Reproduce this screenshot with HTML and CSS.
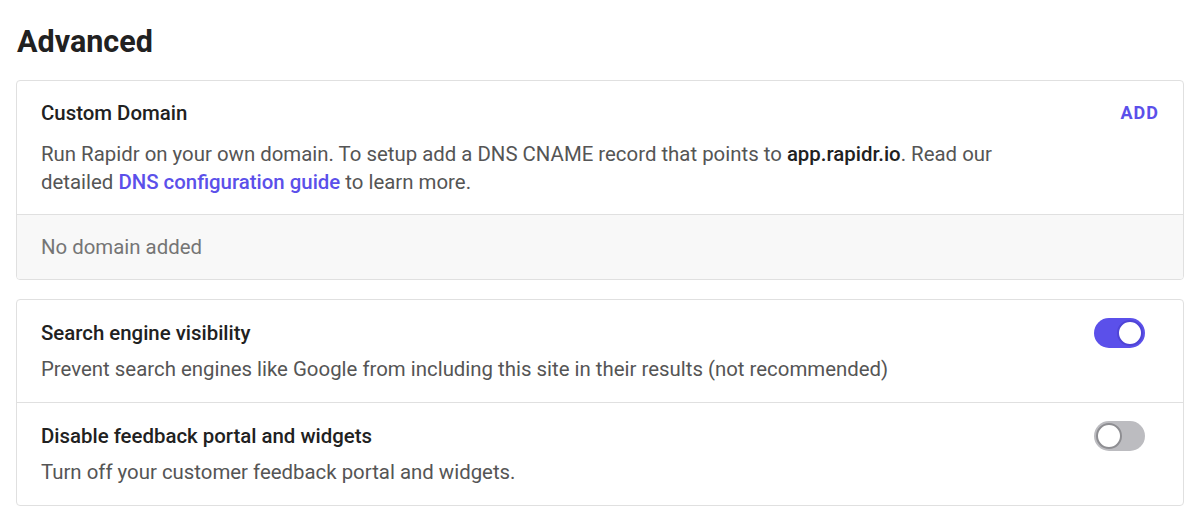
FILE: index.html
```html
<!DOCTYPE html>
<html lang="en">
<head>
<meta charset="utf-8">
<title>Advanced</title>
<link rel="stylesheet" href="styles.css">
</head>
<body>
<main class="page">
  <h1 class="page-title">Advanced</h1>

  <section class="card">
    <div class="card-main">
      <div class="card-head">
        <h2 class="item-title">Custom Domain</h2>
        <a class="add-link" href="#">ADD</a>
      </div>
      <p class="item-desc domain-desc">Run Rapidr on your own domain. To setup add a DNS CNAME record that points to <strong>app.rapidr.io</strong>. Read our detailed <a class="link" href="#">DNS configuration guide</a> to learn more.</p>
    </div>
    <div class="card-empty">No domain added</div>
  </section>

  <section class="card">
    <div class="setting-row">
      <div class="setting-text">
        <h2 class="item-title">Search engine visibility</h2>
        <p class="item-desc">Prevent search engines like Google from including this site in their results (not recommended)</p>
      </div>
      <span class="toggle toggle-on"><span class="knob"></span></span>
    </div>
    <div class="setting-row">
      <div class="setting-text">
        <h2 class="item-title">Disable feedback portal and widgets</h2>
        <p class="item-desc">Turn off your customer feedback portal and widgets.</p>
      </div>
      <span class="toggle toggle-off"><span class="knob"></span></span>
    </div>
  </section>
</main>
</body>
</html>
```

FILE: styles.css
```css
* {
  box-sizing: border-box;
}

html, body {
  margin: 0;
  padding: 0;
  background: #ffffff;
}

body {
  font-family: Roboto, "Liberation Sans", Arial, sans-serif;
  color: #212121;
}

.page {
  padding: 24px 16px 0 16px;
  display: flex;
  flex-direction: column;
  gap: 19px;
}

.page-title {
  margin: 0 0 1px 1px;
  font-size: 30.5px;
  line-height: 36px;
  font-weight: 700;
  color: #212121;
}

.card {
  border: 1px solid #e0e0e0;
  border-radius: 4px;
  background: #ffffff;
  overflow: hidden;
}

.card-main {
  padding: 20px 24px 18px 24px;
}

.card-head {
  display: flex;
  align-items: center;
  justify-content: space-between;
}

.item-title {
  margin: 0;
  font-size: 20.4px;
  line-height: 24px;
  font-weight: 500;
  color: #212121;
}

.add-link {
  font-size: 18px;
  line-height: 24px;
  font-weight: 700;
  letter-spacing: 1px;
  color: #5b50ea;
  text-decoration: none;
}

.item-desc {
  margin: 10px 0 0 0;
  font-size: 20.4px;
  line-height: 28px;
  color: #555555;
}

.domain-desc {
  margin-top: 15px;
  max-width: 1000px;
}

.item-desc strong {
  font-weight: 500;
  color: #212121;
}

.link {
  color: #5b50ea;
  font-weight: 500;
  text-decoration: none;
}

.card-empty {
  border-top: 1px solid #e0e0e0;
  background: #f8f8f8;
  padding: 20px 24px;
  font-size: 20.4px;
  line-height: 24px;
  color: #757575;
}

.setting-row {
  display: flex;
  align-items: flex-start;
  justify-content: space-between;
  padding: 21px 38px 19px 24px;
}

.setting-row + .setting-row {
  border-top: 1px solid #e0e0e0;
}

.toggle {
  flex: none;
  width: 51px;
  height: 30px;
  border-radius: 15px;
  display: flex;
  align-items: center;
  padding: 0 2px;
  margin-top: -3px;
}

.toggle-on {
  background: #5b50ea;
  justify-content: flex-end;
}

.toggle-off {
  background: #bcbcc0;
  justify-content: flex-start;
}

.knob {
  width: 26px;
  height: 26px;
  border-radius: 50%;
  background: #ffffff;
  border: 2px solid #5b50ea;
}

.toggle-on .knob {
  border-color: #4f44d6;
}

.toggle-off .knob {
  border-color: #8e8e92;
}
```
